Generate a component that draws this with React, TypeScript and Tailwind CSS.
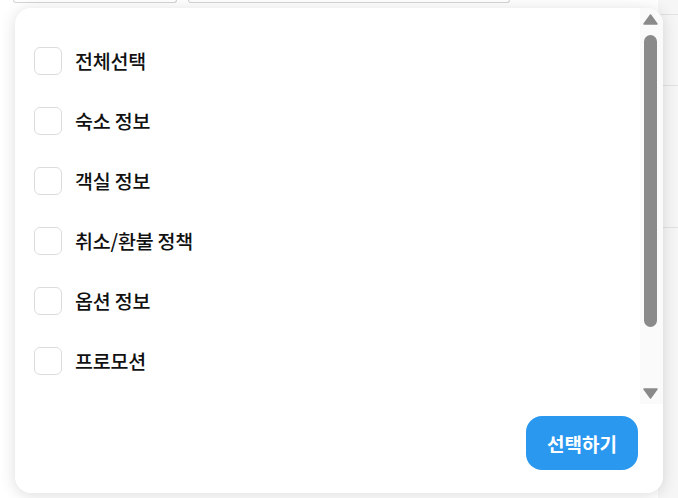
import React from "react";

const items = ["전체선택", "숙소 정보", "객실 정보", "취소/환불 정책", "옵션 정보", "프로모션"];

export default function App() {
  return (
    <div
      className="relative w-[678px] h-[498px] overflow-hidden bg-white"
      style={{ fontFamily: '"Noto Sans CJK KR", "Noto Sans", sans-serif' }}
    >
      {/* background content */}
      <div className="flex gap-[11px] pl-[13px]">
        <div className="w-[164px] h-[3px] rounded-b-md border-b border-x border-[#d4d4d4]" />
        <div className="w-[322px] h-[3px] rounded-b-md border-b border-x border-[#d4d4d4]" />
      </div>
      <div className="absolute right-0 top-0 w-[20px] h-[498px] bg-[#f6f6f6]">
        <div className="mt-[14px] h-px bg-[#e2e2e2]" />
        <div className="mt-[70px] h-px bg-[#e2e2e2]" />
        <div className="mt-[141px] h-px bg-[#e2e2e2]" />
      </div>

      {/* popup card */}
      <div className="absolute left-[15px] top-[8px] w-[648px] h-[485px] rounded-2xl bg-white overflow-hidden shadow-[0_2px_16px_rgba(0,0,0,0.14)] flex flex-col">
        <div className="flex h-[396px]">
          <div className="flex-1 pt-[23px] pl-[19px]">
            {items.map((t) => (
              <div key={t} className="h-[60px] flex items-center gap-[13px]">
                <div className="w-[28px] h-[28px] rounded-md border border-[#dcdcdc] bg-white" />
                <span className="text-[19.5px] font-medium text-[#111] leading-none tracking-[-0.2px]">{t}</span>
              </div>
            ))}
          </div>
          <div className="w-[23px] bg-[#fafafa] flex flex-col items-center pr-[2px]">
            <svg width="15" height="11" viewBox="0 0 15 11" className="mt-[6px]">
              <path d="M7.5 1 L14 10 L1 10 Z" fill="#8a8a8a" stroke="#8a8a8a" strokeLinejoin="round" strokeWidth="1.5" />
            </svg>
            <div className="mt-[10px] w-[13px] h-[292px] rounded-full bg-[#8a8a8a]" />
            <svg width="15" height="11" viewBox="0 0 15 11" className="mt-[61px]">
              <path d="M7.5 10 L14 1 L1 1 Z" fill="#8a8a8a" stroke="#8a8a8a" strokeLinejoin="round" strokeWidth="1.5" />
            </svg>
          </div>
        </div>
        <div className="flex justify-end pr-[25px] pt-[12px]">
          <button className="w-[112px] h-[54px] rounded-2xl bg-[#2b98ef] text-white text-[19px] font-bold leading-none">
            선택하기
          </button>
        </div>
      </div>
    </div>
  );
}
